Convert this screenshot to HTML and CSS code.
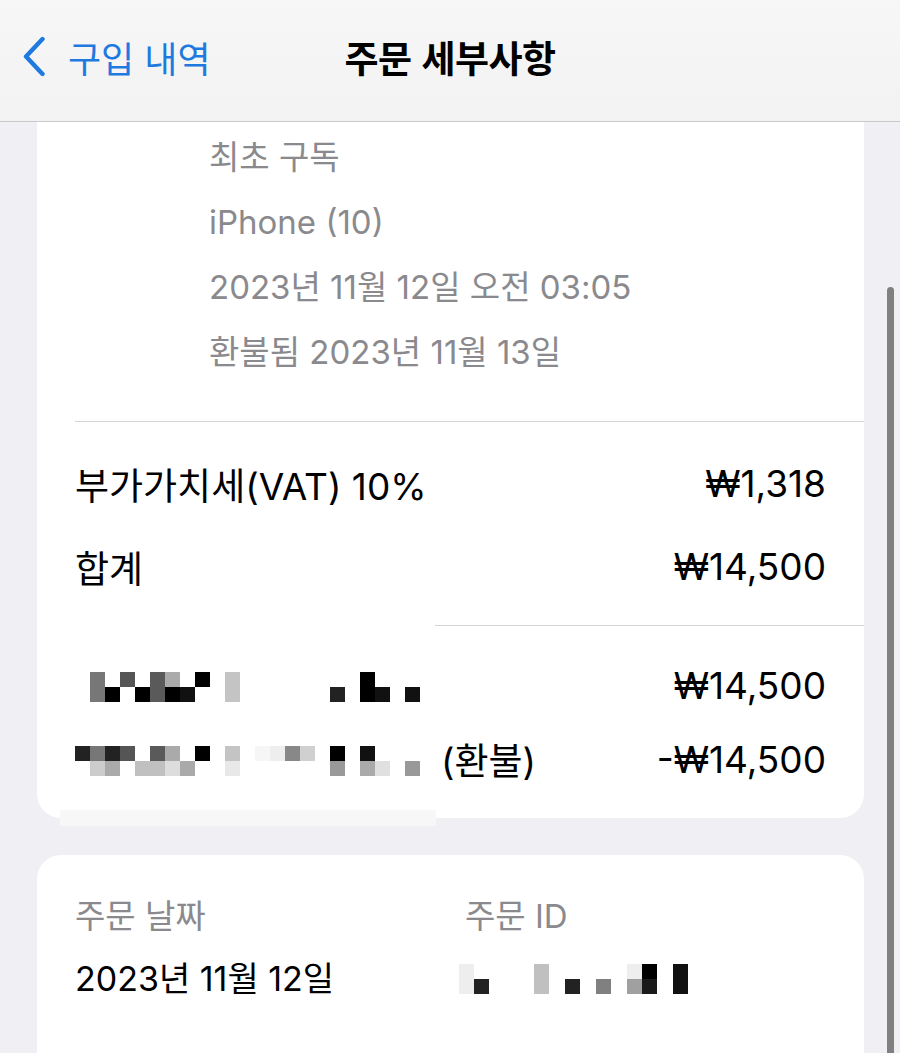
FILE: index.html
```html
<!DOCTYPE html>
<html lang="ko">
<head>
	<meta charset="UTF-8">
	<title>주문 세부사항</title>
	<link rel="stylesheet" href="styles.css">
</head>
<body>
	<div class="nav">
		<a href="#" class="back">
			<svg width="24" height="41" viewBox="0 0 24 41"><path d="M20.5 3 L4 20.5 L20.5 38" fill="none" stroke="#1f7ae0" stroke-width="4.4" stroke-linecap="round" stroke-linejoin="round"/></svg>
			<span>구입 내역</span>
		</a>
		<h1>주문 세부사항</h1>
		<span></span>
	</div>

	<div class="card card-top">
		<div class="meta">
			<p>최초 구독</p>
			<p>iPhone (10)</p>
			<p>2023년 11월 12일 오전 03:05</p>
			<p>환불됨 2023년 11월 13일</p>
		</div>
		<div class="sum">
			<div class="row"><span>부가가치세(VAT) 10%</span><span>₩1,318</span></div>
			<div class="row"><span>합계</span><span>₩14,500</span></div>
		</div>
		<div class="pay">
			<div class="row">
				<span class="hidden">
					<svg width="360" height="30" viewBox="0 0 360 30">
						<rect x="15" y="0" width="15" height="30" fill="#777"/>
						<rect x="30" y="15" width="15" height="15" fill="#000"/>
						<rect x="45" y="0" width="15" height="15" fill="#555"/>
						<rect x="60" y="15" width="15" height="15" fill="#000"/>
						<rect x="75" y="0" width="15" height="30" fill="#5a5a5a"/>
						<rect x="90" y="0" width="15" height="15" fill="#aaa"/>
						<rect x="90" y="15" width="15" height="15" fill="#000"/>
						<rect x="105" y="15" width="15" height="15" fill="#111"/>
						<rect x="120" y="0" width="15" height="15" fill="#000"/>
						<rect x="150" y="0" width="15" height="30" fill="#c4c4c4"/>
						<rect x="255" y="15" width="15" height="15" fill="#222"/>
						<rect x="285" y="0" width="15" height="30" fill="#000"/>
						<rect x="300" y="15" width="15" height="15" fill="#111"/>
						<rect x="330" y="15" width="15" height="15" fill="#111"/>
					</svg>
				</span>
				<span>₩14,500</span>
			</div>
			<div class="row">
				<span class="hidden">
					<svg width="360" height="30" viewBox="0 0 360 30">
						<rect x="0" y="0" width="15" height="15" fill="#222"/>
						<rect x="15" y="0" width="15" height="15" fill="#777"/>
						<rect x="15" y="15" width="15" height="15" fill="#ccc"/>
						<rect x="30" y="0" width="15" height="15" fill="#222"/>
						<rect x="30" y="15" width="15" height="15" fill="#aaa"/>
						<rect x="45" y="0" width="15" height="15" fill="#555"/>
						<rect x="60" y="15" width="15" height="15" fill="#c0c0c0"/>
						<rect x="75" y="0" width="15" height="15" fill="#5a5a5a"/>
						<rect x="75" y="15" width="15" height="15" fill="#c0c0c0"/>
						<rect x="90" y="0" width="15" height="15" fill="#aaa"/>
						<rect x="90" y="15" width="15" height="15" fill="#ddd"/>
						<rect x="105" y="15" width="15" height="15" fill="#aaa"/>
						<rect x="120" y="0" width="15" height="15" fill="#000"/>
						<rect x="150" y="0" width="15" height="15" fill="#c4c4c4"/>
						<rect x="150" y="15" width="15" height="15" fill="#e8e8e8"/>
						<rect x="180" y="0" width="15" height="15" fill="#f6f6f6"/>
						<rect x="195" y="0" width="15" height="15" fill="#eee"/>
						<rect x="210" y="0" width="15" height="15" fill="#888"/>
						<rect x="225" y="0" width="15" height="15" fill="#d0d0d0"/>
						<rect x="255" y="0" width="15" height="15" fill="#000"/>
						<rect x="255" y="15" width="15" height="15" fill="#999"/>
						<rect x="285" y="0" width="15" height="15" fill="#111"/>
						<rect x="285" y="15" width="15" height="15" fill="#aaa"/>
						<rect x="300" y="15" width="15" height="15" fill="#e0e0e0"/>
						<rect x="330" y="15" width="15" height="15" fill="#999"/>
					</svg>
					(환불)
				</span>
				<span>-₩14,500</span>
			</div>
		</div>
		<div class="patch"></div>
	</div>

	<div class="card card-info">
		<div class="info">
			<span class="label">주문 날짜</span>
			<span class="label">주문 ID</span>
			<span class="value">2023년 11월 12일</span>
			<span class="value id">
				<svg width="240" height="30" viewBox="0 0 240 30">
					<rect x="0" y="0" width="15" height="30" fill="#eee"/>
					<rect x="15" y="15" width="15" height="15" fill="#222"/>
					<rect x="75" y="0" width="15" height="30" fill="#c0c0c0"/>
					<rect x="106" y="15" width="15" height="15" fill="#222"/>
					<rect x="137" y="15" width="15" height="15" fill="#808080"/>
					<rect x="168" y="0" width="15" height="15" fill="#eee"/>
					<rect x="168" y="15" width="15" height="15" fill="#a0a0a0"/>
					<rect x="183" y="0" width="15" height="15" fill="#000"/>
					<rect x="183" y="15" width="15" height="15" fill="#1a1a1a"/>
					<rect x="214" y="0" width="15" height="30" fill="#111"/>
				</svg>
			</span>
		</div>
	</div>

	<div class="scrollbar"></div>
</body>
</html>
```

FILE: styles.css
```css
body,p,h1{
	margin: 0;
	padding: 0;
}
body{
	background: #efeff4;
	font-family: "Inter", "Noto Sans CJK KR", sans-serif;
	color: #000;
	height: 1053px;
	overflow: hidden;
}
.nav{
	display: grid;
	grid-template-columns: 1fr auto 1fr;
	align-items: center;
	height: 122px;
	box-sizing: border-box;
	padding: 0 22px 8px;
	background: linear-gradient(#f7f7f7, #f2f2f2);
	border-bottom: 1px solid #c9c9c9;
}
.nav .back{
	display: flex;
	align-items: center;
	gap: 22px;
	color: #1f7ae0;
	text-decoration: none;
	font-size: 36px;
}
.nav .back svg{
	display: block;
}
.nav h1{
	font-size: 37px;
	font-weight: 700;
	font-family: "Noto Sans CJK KR", sans-serif;
	letter-spacing: -0.5px;
}
.card{
	position: relative;
	margin: 0 36px 0 37px;
	background: #fff;
}
.card-top{
	border-radius: 0 0 24px 24px;
}
.meta{
	padding: 3px 0 36px 172px;
	color: #8a8a8e;
	font-size: 33px;
	line-height: 65px;
}
.sum{
	margin-left: 38px;
	padding: 20px 38px 17px 0;
	border-top: 1px solid #d6d6d9;
	font-size: 37px;
}
.sum .row{
	height: 83px;
}
.row{
	display: flex;
	justify-content: space-between;
	align-items: center;
}
.pay{
	position: relative;
	padding: 23px 38px 22px;
	font-size: 37px;
}
.pay:before{
	content: "";
	position: absolute;
	top: 0;
	left: 398px;
	right: 0;
	border-top: 1px solid #d6d6d9;
}
.pay .row{
	height: 74px;
}
.hidden{
	display: flex;
	align-items: center;
	gap: 6px;
}
.hidden svg{
	display: block;
	margin-top: 4px;
}
.patch{
	position: absolute;
	left: 23px;
	bottom: -8px;
	width: 376px;
	height: 16px;
	background: #f7f7f8;
}
.card-info{
	margin-top: 37px;
	border-radius: 24px 24px 0 0;
	height: 260px;
}
.info{
	display: grid;
	grid-template-columns: 390px 1fr;
	row-gap: 23px;
	padding: 41px 38px 0;
	line-height: 40px;
}
.label{
	color: #8a8a8e;
	font-size: 33px;
}
.value{
	font-size: 34px;
}
.id svg{
	display: block;
	margin: 5px 0 0 -6px;
}
.scrollbar{
	position: absolute;
	top: 287px;
	left: 887px;
	width: 7px;
	height: 800px;
	border-radius: 4px;
	background: #808080;
}
```
